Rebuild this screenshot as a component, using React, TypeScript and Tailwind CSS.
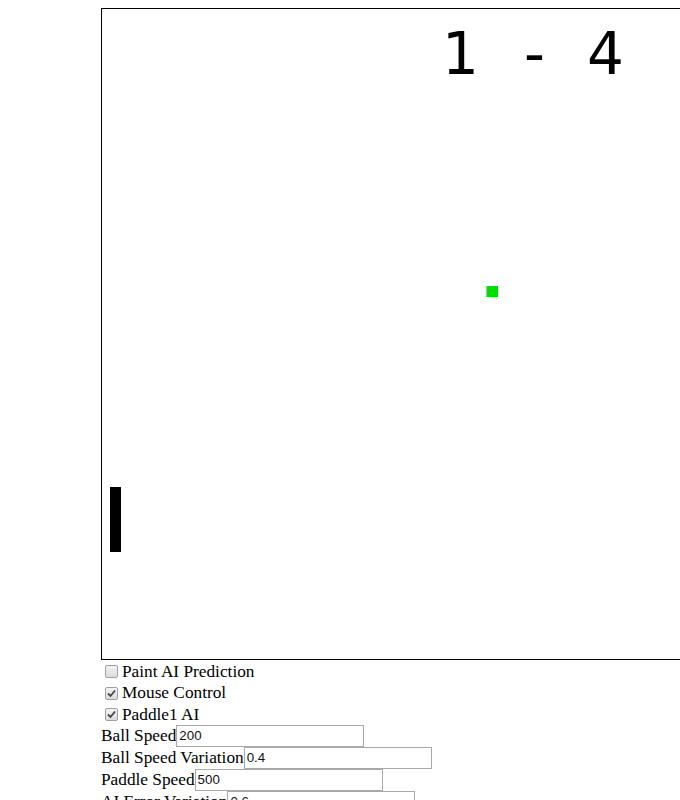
import React from "react";

function Check({ checked }: { checked: boolean }) {
  return (
    <span className="ml-[4px] mr-[4px] inline-flex h-[13px] w-[13px] items-center justify-center rounded-[2px] border border-[#a0a0a0] bg-[linear-gradient(#f4f4f4,#dcdcdc)]">
      {checked && (
        <svg width="9" height="9" viewBox="0 0 9 9">
          <path d="M1 4.5 L3.5 7 L8 1.5" stroke="#444" strokeWidth="1.8" fill="none" />
        </svg>
      )}
    </span>
  );
}

function Field({ label, value }: { label: string; value: string }) {
  return (
    <div className="flex h-[22px] items-center">
      <span className="whitespace-nowrap">{label}</span>
      <div className="flex h-[22px] w-[188px] shrink-0 items-center border border-[#a9a9a9] bg-white pl-[2px] font-['Liberation_Sans',sans-serif] text-[13.3px] text-[#111]">
        {value}
      </div>
    </div>
  );
}

export default function App() {
  return (
    <div className="h-[800px] w-[680px] overflow-hidden bg-white font-['Liberation_Serif',serif] text-[17.3px] text-black">
      <div className="ml-[101px] pt-[8px]">
        <div className="relative h-[652px] w-[800px] border border-black bg-white">
          <span className="absolute left-[340px] top-[16px] font-['DejaVu_Sans',sans-serif] text-[58px] leading-none">1</span>
          <span className="absolute left-[422px] top-[16px] font-['DejaVu_Sans',sans-serif] text-[58px] leading-none">-</span>
          <span className="absolute left-[485px] top-[16px] font-['DejaVu_Sans',sans-serif] text-[58px] leading-none">4</span>
          <div className="absolute left-[384px] top-[277px] h-[11px] w-[12px] border-l border-[#7de87d] bg-[#00dd00]" />
          <div className="absolute left-[8px] top-[478px] h-[65px] w-[11px] bg-black" />
        </div>
        <div className="flex flex-col">
          <div className="mt-[1px] flex h-[21px] items-center">
            <Check checked={false} />
            <span>Paint AI Prediction</span>
          </div>
          <div className="flex h-[22px] items-center">
            <Check checked={true} />
            <span>Mouse Control</span>
          </div>
          <div className="flex h-[21px] items-center">
            <Check checked={true} />
            <span>Paddle1 AI</span>
          </div>
          <div className="flex flex-col">
            <Field label="Ball Speed" value="200" />
            <Field label="Ball Speed Variation" value="0.4" />
            <Field label="Paddle Speed" value="500" />
            <Field label="AI Error Variation" value="0.6" />
          </div>
        </div>
      </div>
    </div>
  );
}
